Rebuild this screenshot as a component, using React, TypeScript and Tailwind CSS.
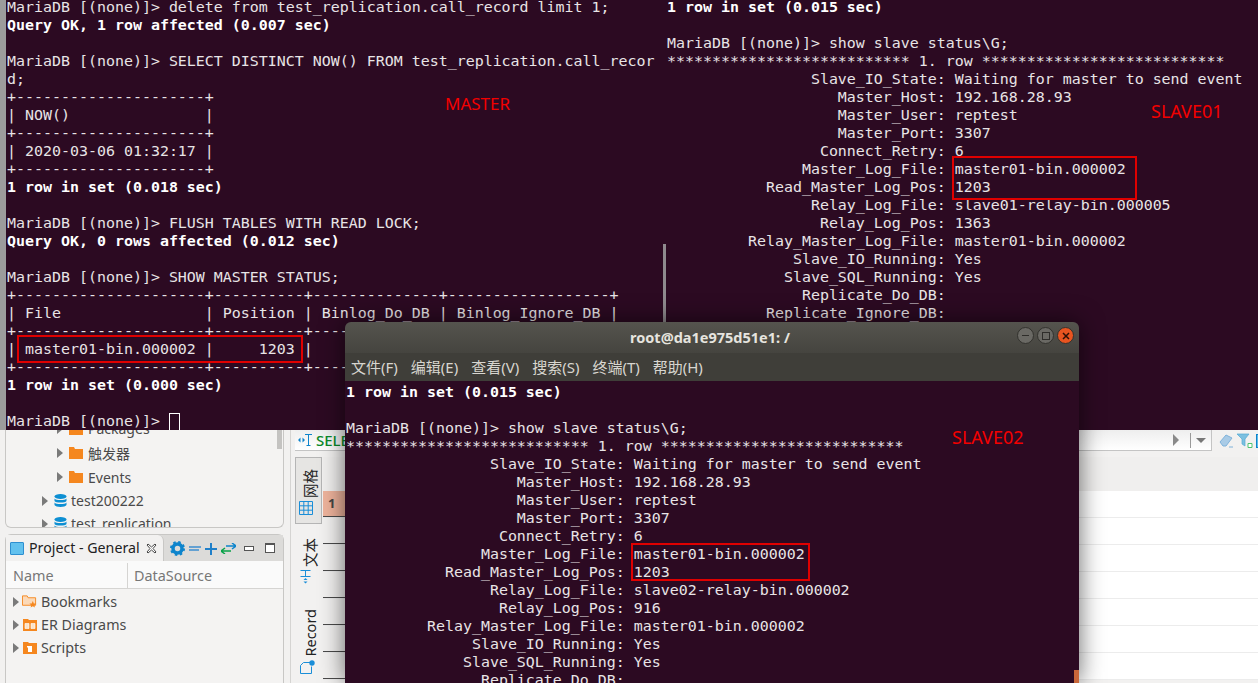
const LABELS = [
  ['Slave_IO_State', 'Waiting for master to send event'],
  ['Master_Host', '192.168.28.93'],
  ['Master_User', 'reptest'],
  ['Master_Port', '3307'],
  ['Connect_Retry', '6'],
  ['Master_Log_File', 'master01-bin.000002'],
  ['Read_Master_Log_Pos', '1203'],
];

const statusLines = (relayFile: string, relayPos: string, extra: string[]) => [
  ...LABELS,
  ['Relay_Log_File', relayFile],
  ['Relay_Log_Pos', relayPos],
  ['Relay_Master_Log_File', 'master01-bin.000002'],
  ['Slave_IO_Running', 'Yes'],
  ['Slave_SQL_Running', 'Yes'],
  ...extra.map((name) => [name, '']),
].map(([k, v]) => `${k.padStart(30)}: ${v}`);

const PROMPT = 'MariaDB [(none)]> ';
const STARS = '*'.repeat(27);
const statusHead = [
  '**1 row in set (0.015 sec)',
  '',
  `${PROMPT}show slave status\\G;`,
  `${STARS} 1. row ${STARS}`,
];

const border1 = '+---------------------+';
const border2 = '+---------------------+----------+--------------+------------------+';

const masterLines = [
  `${PROMPT}delete from test_replication.call_record limit 1;`,
  '**Query OK, 1 row affected (0.007 sec)',
  '',
  `${PROMPT}SELECT DISTINCT NOW() FROM test_replication.call_recor`,
  'd;',
  border1,
  '| NOW()               |',
  border1,
  '| 2020-03-06 01:32:17 |',
  border1,
  '**1 row in set (0.018 sec)',
  '',
  `${PROMPT}FLUSH TABLES WITH READ LOCK;`,
  '**Query OK, 0 rows affected (0.012 sec)',
  '',
  `${PROMPT}SHOW MASTER STATUS;`,
  border2,
  '| File                | Position | Binlog_Do_DB | Binlog_Ignore_DB |',
  border2,
  '| master01-bin.000002 |     1203 |              |                  |',
  border2,
  '**1 row in set (0.000 sec)',
  '',
];

function TermLines({ lines }: { lines: string[] }) {
  return (
    <>
      {lines.map((line, i) => {
        const bold = line.startsWith('**') && !line.startsWith('***');
        return (
          <div key={i} className={`h-[18px] whitespace-pre ${bold ? 'font-bold text-white' : ''}`}>
            {bold ? line.slice(2) : line}
          </div>
        );
      })}
    </>
  );
}

function Folder({ className = '' }: { className?: string }) {
  return (
    <svg width="14" height="12" viewBox="0 0 14 12" className={`shrink-0 ${className}`}>
      <path d="M0 0h5l1 2h8v10H0z" fill="#f5871f" />
    </svg>
  );
}

function BookmarkFolder() {
  return (
    <svg width="16" height="15" viewBox="0 0 16 15">
      <path d="M.500 1.500h5l1 2h8v8H.500z" fill="#fbd9b8" stroke="#f5871f" />
      <path d="M11.500 7l1.100 2.500 2.500.2-1.900 1.700.6 2.600-2.300-1.400-2.300 1.400.6-2.600-1.900-1.700 2.500-.2z" fill="#f5871f" />
    </svg>
  );
}

function DiagramFolder() {
  return (
    <svg width="14" height="13" viewBox="0 0 14 13">
      <path d="M0 1h5l1 1h8v11H0z" fill="#f5871f" />
      <path d="M2 5.500h4v5H2zM8 5.500h4v5H8z" fill="#fbe3c8" stroke="#fff" strokeWidth=".6" />
    </svg>
  );
}

function ScriptFolder() {
  return (
    <svg width="14" height="12" viewBox="0 0 14 12">
      <path d="M0 0h5l1 1h8v11H0z" fill="#f5871f" />
      <path d="M4 4h5v6H5V5.500H4z" fill="#fff" />
    </svg>
  );
}

function Arrow() {
  return (
    <svg width="6" height="10" viewBox="0 0 6 10" className="shrink-0">
      <path d="M0 0l6 5-6 5z" fill="#7a7a7a" />
    </svg>
  );
}

function DbIcon() {
  return (
    <svg width="13" height="13" viewBox="0 0 13 13" className="shrink-0">
      <ellipse cx="6.500" cy="2.500" rx="6" ry="2.500" fill="#0d8fd3" />
      <path d="M.5 4.500c1 2 11 2 12 0V7c-1 2-11 2-12 0zM.5 8.500c1 2 11 2 12 0V11c-1 2.500-11 2.500-12 0z" fill="#0d8fd3" />
    </svg>
  );
}

function GridIcon() {
  return (
    <svg width="14" height="14" viewBox="0 0 14 14" className="shrink-0 -ml-[6px]">
      <path d="M.5.500h13v13H.5zM.5 4.800h13M.5 9.200h13M4.800.500v13M9.200.500v13" fill="none" stroke="#1a8ed8" />
    </svg>
  );
}

function TextModeIcon() {
  return (
    <svg width="11" height="14" viewBox="0 0 11 14" className="shrink-0 -ml-[6px]">
      <path d="M.5.500h10M5.500.500v6M.5 6.500h10" fill="none" stroke="#1a8ed8" />
      <path d="M3.500 10l2-2 2 2zM3.500 11.500l2 2 2-2z" fill="#1a8ed8" />
    </svg>
  );
}

function RecordIcon() {
  return (
    <svg width="15" height="14" viewBox="0 0 15 14" className="shrink-0 -ml-[2px]">
      <path d="M.5 5.500l3-3h6.500M.5 5.500v8h11v-7" fill="none" stroke="#1a8ed8" />
      <circle cx="12" cy="3" r="2.700" fill="#1a8ed8" />
    </svg>
  );
}

function TreeRow({ pad, icon, label, h }: { pad: string; icon: React.ReactNode; label: string; h: string }) {
  return (
    <div className={`flex items-center ${pad} ${h} shrink-0 font-['Noto_Sans','Noto_Sans_CJK_SC',sans-serif] text-[14px] text-[#4a4a4a]`}>
      <Arrow />
      {icon}
      <span>{label}</span>
    </div>
  );
}

function ProjectRow({ icon, label }: { icon: React.ReactNode; label: string }) {
  return (
    <div className="flex h-[23px] items-center pl-[7px] text-[14.300px] text-[#4a4a4a]">
      <Arrow />
      <span className="ml-[3px] mr-[4px] flex w-[15px] justify-center">{icon}</span>
      <span>{label}</span>
    </div>
  );
}

function SideTab({ icon, label, boxed, h, pb }: { icon: React.ReactNode; label: string; boxed?: boolean; h: string; pb: string }) {
  return (
    <div
      className={`flex w-[27px] flex-col-reverse items-center justify-start gap-[3px] font-['Noto_Sans','Noto_Sans_CJK_SC',sans-serif] text-[#222] ${h} ${pb} ${boxed ? 'border border-[#b5b5b5] bg-[#e6e5e3]' : ''}`}
    >
      {icon}
      <span className="ml-[3px] rotate-180 text-[14.500px] leading-none [text-orientation:sideways] [writing-mode:vertical-rl]">{label}</span>
    </div>
  );
}

function WindowButton({ tone, children }: { tone: string; children: React.ReactNode }) {
  return (
    <span className={`flex h-[17px] w-[17px] items-center justify-center rounded-full border border-[#33322e] ${tone}`}>
      {children}
    </span>
  );
}

export default function App() {
  const gridRows = [0, 1, 2, 3, 4, 5, 6];
  return (
    <div className="relative h-[683px] w-[1258px] overflow-hidden bg-[#2c0a22] font-['Noto_Sans',sans-serif]">
      {/* two terminals behind */}
      <div className="flex h-[430px] font-['DejaVu_Sans_Mono',monospace] text-[14.950px] leading-[18px] text-[#e8e4e6]">
        <div className="relative w-[666px] shrink-0 overflow-hidden border-l-[6px] border-[#9c9c9c] pl-[1px]">
          <div className="-mt-[2px]">
            <TermLines lines={masterLines} />
            <div className="flex h-[18px] whitespace-pre">
              {PROMPT}
              <span className="mt-[1px] h-[19px] w-[11px] border border-white" />
            </div>
          </div>
          <div className="absolute right-0 top-[244px] h-[78px] w-[3px] bg-[#8f8a8e]" />
        </div>
        <div className="min-w-0 flex-1 overflow-hidden pl-[1px]">
          <div className="-mt-[2px]">
            <TermLines lines={[...statusHead, ...statusLines('slave01-relay-bin.000005', '1363', ['Replicate_Do_DB', 'Replicate_Ignore_DB'])]} />
          </div>
        </div>
      </div>

      {/* DBeaver underneath */}
      <div className="flex h-[253px] bg-[#f2f1f0]">
        <div className="flex w-[290px] shrink-0 flex-col pl-[5px] pr-[6px]">
          <div className="relative h-[98px] shrink-0 overflow-hidden rounded-b-[6px] border border-t-0 border-[#c8c7c5] bg-[#f4f3f2]">
            <div className="-mt-[14px]">
              <TreeRow pad="pl-[51px]" h="h-[25px]" icon={<Folder className="ml-[6px] mr-[5px]" />} label="Packages" />
              <TreeRow pad="pl-[51px]" h="h-[24px]" icon={<Folder className="ml-[6px] mr-[5px]" />} label="触发器" />
              <TreeRow pad="pl-[51px]" h="h-[24px]" icon={<Folder className="ml-[6px] mr-[5px]" />} label="Events" />
              <TreeRow pad="pl-[36px]" h="h-[23px]" icon={<span className="ml-[6px] mr-[4px]"><DbIcon /></span>} label="test200222" />
              <TreeRow pad="pl-[36px]" h="h-[23px]" icon={<span className="ml-[6px] mr-[4px]"><DbIcon /></span>} label="test_replication" />
            </div>
            <div className="absolute right-[1px] top-0 h-[19px] w-[5px] bg-[#c4c3c1]" />
          </div>
          <div className="mt-[6px] flex min-h-0 flex-1 flex-col rounded-t-[6px] border border-b-0 border-[#c8c7c5] bg-[#f4f3f2]">
            <div className="flex h-[26px] shrink-0 items-center bg-[#dcdbd9]">
              <div className="flex h-full w-[158px] shrink-0 items-center rounded-tr-[6px] border-r border-[#c8c7c5] bg-[#f2f1f0] pl-[4px] text-[14.200px] text-[#222]">
                <span className="mr-[5px] h-[13px] w-[14px] rounded-[1px] border border-[#2e8fd0] bg-[#62c1ee]" />
                <span>Project - General</span>
                <svg width="11" height="11" viewBox="0 0 11 11" className="ml-[6px]">
                  <path d="M2 1l3.500 3L9 1l1 1-3 3.500 3 3.500-1 1-3.500-3L2 10 1 9l3-3.500L1 2z" fill="#fff" stroke="#333" strokeWidth=".9" />
                </svg>
              </div>
              <div className="ml-[6px] flex items-center gap-[3px]">
                <svg width="15" height="15" viewBox="0 0 15 15">
                  <circle cx="7.500" cy="7.500" r="4.500" fill="none" stroke="#0d84cc" strokeWidth="3.500" />
                  <circle cx="7.500" cy="7.500" r="6.500" fill="none" stroke="#0d84cc" strokeWidth="2" strokeDasharray="2.500 2.600" />
                </svg>
                <svg width="14" height="12" viewBox="0 0 14 12"><path d="M1 5h12M1 8h10" stroke="#3d8fd0" strokeWidth="1.500" /></svg>
                <svg width="13" height="13" viewBox="0 0 13 13"><path d="M6 1v12M0 7h12" stroke="#1f7fc9" strokeWidth="2" /></svg>
                <svg width="15" height="11" viewBox="0 0 15 11"><path d="M5 3h10M11 0l4 3-4 3" fill="none" stroke="#0d84cc" strokeWidth="1.500" /><path d="M10 8H0M4 5L0 8l4 3" fill="none" stroke="#0aa34a" strokeWidth="1.500" /></svg>
                <span className="ml-[5px] h-[5px] w-[10px] border border-[#555] bg-white" />
                <span className="ml-[8px] h-[10px] w-[10px] border border-t-2 border-[#555] bg-white" />
              </div>
            </div>
            <div className="flex h-[28px] shrink-0 border-b border-[#d5d4d2] bg-[#fafafa] pt-[2px] text-[14.400px] text-[#777]">
              <div className="flex w-[122px] items-center border-r border-[#d5d4d2] pl-[7px]">Name</div>
              <div className="flex items-center pl-[6px]">DataSource</div>
            </div>
            <div className="pt-[1px]">
              <ProjectRow icon={<BookmarkFolder />} label="Bookmarks" />
              <ProjectRow icon={<DiagramFolder />} label="ER Diagrams" />
              <ProjectRow icon={<ScriptFolder />} label="Scripts" />
            </div>
          </div>
        </div>

        <div className="flex min-w-0 flex-1 flex-col border-l border-[#d5d4d2] pl-[4px]">
          <div className="flex h-[21px] shrink-0 items-center">
            <div className="flex h-full w-[917px] shrink-0 items-center border-b border-r border-[#c4c4c4] bg-gradient-to-b from-[#eeeeee] to-white pl-[3px] text-[15px]">
              <svg width="15" height="12" viewBox="0 0 15 12" className="mr-[3px]">
                <path d="M0 6l2.500-2.500v5zM7 6L4.500 3.500v5z" fill="#0d84cc" />
                <path d="M7 .500h7M10.500.500v11M8.500 11.500h4" fill="none" stroke="#0d84cc" />
              </svg>
              <span className="font-medium text-[#0a8a2a]">SELECT</span>
              <span className="ml-auto mr-[11px] h-0 w-0 border-y-[6px] border-l-[6px] border-y-transparent border-l-[#8a8a8a]" />
              <span className="mr-[5px] h-[15px] w-px bg-[#999]" />
              <span className="mr-[5px] h-0 w-0 border-x-[5px] border-t-[5px] border-x-transparent border-t-[#777]" />
            </div>
            <div className="ml-[7px] flex shrink-0 items-center gap-[3px]">
              <svg width="15" height="15" viewBox="0 0 15 15">
                <path d="M1 9l6-7 6 3-6 8H4z" fill="#a9cbe6" stroke="#7fb2da" />
                <path d="M10 14h4" stroke="#7fb2da" />
              </svg>
              <svg width="16" height="16" viewBox="0 0 16 16">
                <path d="M0 1h12L8 6v7L5 11V6z" fill="#7cc0e0" stroke="#55a9d2" strokeWidth=".7" />
                <path d="M11 10.500h4v4h-4z" fill="#fff" stroke="#4fc46f" />
              </svg>
              <span className="h-[14px] w-[12px] shrink-0 border border-[#0d84cc] bg-[#5dbbe8]" />
            </div>
          </div>
          <div className="flex min-h-0 flex-1 pt-[6px]">
            <div className="flex w-[28px] shrink-0 flex-col">
              <SideTab boxed h="h-[67px]" pb="pb-[8px]" label="网格" icon={<GridIcon />} />
              <SideTab h="h-[65px]" pb="pb-[5px]" label="文本" icon={<TextModeIcon />} />
              <SideTab h="h-[93px]" pb="pb-[8px]" label="Record" icon={<RecordIcon />} />
            </div>
            <div className="min-w-0 flex-1">
              <div className="h-[34px] bg-[#f0efee]" />
              {gridRows.map((r) => (
                <div key={r} className="flex h-[27px] border-b border-[#ececec] bg-white">
                  <div className={`flex w-[22px] items-center border-b border-[#4a4a4a] pl-[5px] text-[13px] font-bold text-[#444] ${r === 0 ? 'bg-[#eeb39c]' : 'bg-[#f2f1f0]'}`}>
                    {r === 0 ? '1' : ''}
                  </div>
                </div>
              ))}
            </div>
          </div>
        </div>
      </div>

      {/* annotations on the screenshot */}
      <span className="absolute left-[445px] top-[92px] text-[17px] leading-6 text-[#f40000]">MASTER</span>
      <span className="absolute left-[1151px] top-[99px] text-[18px] leading-6 text-[#f40000]">SLAVE01</span>
      <div className="absolute left-[17px] top-[335px] h-[28px] w-[286px] border-2 border-[#e00000]" />
      <div className="absolute left-[952px] top-[156px] h-[44px] w-[185px] border-2 border-[#e00000]" />

      {/* floating terminal window */}
      <div className="absolute left-[345px] top-[322px] flex h-[361px] w-[734px] flex-col overflow-hidden rounded-t-[6px] shadow-[0_0_24px_rgba(0,0,0,0.6)]">
        <div className="relative flex h-[31px] shrink-0 items-center justify-center bg-gradient-to-b from-[#55544e] to-[#45443f] text-[14.500px] font-bold text-[#e6e4df]">
          <span className="-translate-x-[2px]">root@da1e975d51e1: /</span>
          <div className="absolute right-[5px] top-[5px] flex gap-[3px]">
            <WindowButton tone="bg-[#6a6964]"><span className="h-px w-[7px] bg-[#2e2d2a]" /></WindowButton>
            <WindowButton tone="bg-[#6a6964]"><span className="h-[8px] w-[8px] border border-[#2e2d2a]" /></WindowButton>
            <WindowButton tone="bg-[#e95420]">
              <svg width="8" height="8" viewBox="0 0 8 8"><path d="M1 1l6 6M7 1L1 7" stroke="#2e1006" strokeWidth="1.500" /></svg>
            </WindowButton>
          </div>
        </div>
        <div className="flex h-[28px] shrink-0 items-center gap-[13px] bg-[#3f3e39] pl-[6px] font-['Noto_Sans','Noto_Sans_CJK_SC',sans-serif] text-[15px] text-[#d8d6d0]">
          <span>文件(F)</span>
          <span>编辑(E)</span>
          <span>查看(V)</span>
          <span>搜索(S)</span>
          <span>终端(T)</span>
          <span>帮助(H)</span>
        </div>
        <div className="relative min-h-0 flex-1 overflow-hidden bg-[#2c0a22] pl-[1px] pt-[2px] font-['DejaVu_Sans_Mono',monospace] text-[14.950px] leading-[18px] text-[#e8e4e6]">
          <TermLines lines={[...statusHead, ...statusLines('slave02-relay-bin.000002', '916', ['Replicate_Do_DB'])]} />
          <div className="absolute right-0 top-[289px] h-[13px] w-[5px] bg-[#c9673a]" />
          <div className="absolute left-[286px] top-[162px] h-[38px] w-[179px] border-2 border-[#e00000]" />
          <span className="absolute left-[607px] top-[44px] font-['Noto_Sans',sans-serif] text-[18px] leading-6 text-[#f40000]">SLAVE02</span>
        </div>
      </div>
    </div>
  );
}
